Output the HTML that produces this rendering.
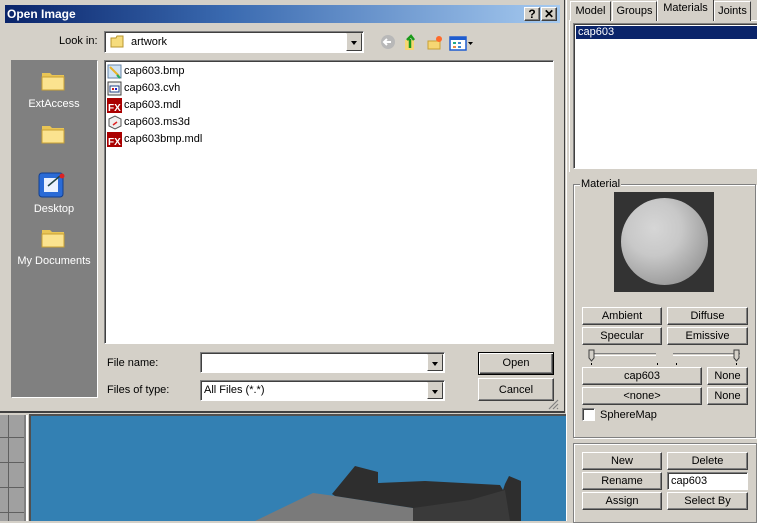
<!DOCTYPE html>
<html><head><meta charset="utf-8"><style>
*{margin:0;padding:0;box-sizing:border-box}
body{width:757px;height:521px;overflow:hidden;background:#d4d0c8;font-family:"Liberation Sans",sans-serif;font-size:11px;color:#000;position:relative}
.a{position:absolute}
.btn{position:absolute;background:#d4d0c8;border:1px solid;border-color:#fff #404040 #404040 #fff;box-shadow:inset -1px -1px 0 #808080;text-align:center;font-size:11px;line-height:17px}
.sunk{position:absolute;background:#fff;border:1px solid;border-color:#808080 #fff #fff #808080;box-shadow:inset 1px 1px 0 #404040}
.dd{position:absolute;right:1px;top:1px;bottom:1px;width:16px;background:#d4d0c8;border:1px solid;border-color:#d4d0c8 #404040 #404040 #fff}
.dd:after{content:"";position:absolute;left:4px;top:7px;border-left:3.5px solid transparent;border-right:3.5px solid transparent;border-top:4px solid #000}
.fi{position:absolute;left:107px;height:16px;line-height:16px;font-size:11px;padding-left:17px}
.ic{position:absolute;left:0;top:1px;width:15px;height:15px}
.wl{color:#fff;font-size:11px;text-align:center;position:absolute;width:86px;left:11px}
</style></head><body>
<div class="a" style="left:0;top:413px;width:566px;height:108px;background:#d4d0c8"></div>
<div class="a" style="left:0;top:415px;width:24px;height:106px;background:#a0a0a0;background-image:linear-gradient(90deg,transparent 8px,#606060 8px,#606060 9px,transparent 9px),repeating-linear-gradient(180deg,transparent 0,transparent 22px,#606060 22px,#606060 23px,transparent 23px,transparent 25px)"></div>
<div class="a" style="left:24px;top:415px;width:2px;height:106px;background:#808080"></div>
<div class="a" style="left:26px;top:415px;width:2px;height:106px;background:#fff"></div>
<div class="a" style="left:29px;top:414px;width:537px;height:107px;background:#3380b3;border-left:2px solid #505050;border-top:2px solid #505050"></div>
<svg class="a" style="left:0;top:0" width="566" height="521">
<polygon points="255,521 313,493 335,496 413,508 413,521" fill="#7a7a7a"/>
<polygon points="332,494 355,466 378,472 378,483 425,481 500,485 503,490 505,484 509,476 521,481 521,521 485,521 413,521 413,508 335,496" fill="#2e2e2e"/>
<polygon points="413,508 470,500 505,490 510,521 413,521" fill="#3a3a3a"/>
</svg>
<div class="a" style="left:0;top:0;width:565px;height:413px;background:#d4d0c8;border-right:1px solid #404040;border-bottom:2px solid #404040"></div>
<div class="a" style="left:5px;top:5px;width:555px;height:18px;background:linear-gradient(90deg,#0a246a,#3a6ab0 40%,#a6caf0);color:#fff;font-weight:bold;font-size:12px;line-height:18px;padding-left:2px">Open Image</div>
<div class="btn" style="left:524px;top:7px;width:16px;height:14px;font-weight:bold;line-height:12px;font-size:12px">?</div>
<div class="btn" style="left:541px;top:7px;width:16px;height:14px;font-weight:bold;line-height:12px;font-size:12px">✕</div>
<div class="a" style="left:59px;top:35px">Look in:</div>
<div class="sunk" style="left:104px;top:31px;width:260px;height:22px">
<svg class="a" style="left:5px;top:3px" width="16" height="13"><path d="M1 3h5l1-2h6v11H1z" fill="#f6dc7c" stroke="#b8962e"/></svg>
<span class="a" style="left:26px;top:4px">artwork</span><div class="dd"></div></div>
<svg class="a" style="left:380px;top:34px" width="95" height="17">
<circle cx="8" cy="8" r="7" fill="#b8b8b8"/><path d="M11 8H5M7 5 4 8l3 3" stroke="#fff" stroke-width="2" fill="none"/>
<path d="M25 6h9v10h-9z" fill="#f6d673"/><path d="M30 14V5M27 6l4-4 3 4" stroke="#1a9a1a" stroke-width="2.5" fill="none"/>
<path d="M48 7h12v8H48z" fill="#f6d673" stroke="#c9a033"/><circle cx="59" cy="5" r="3" fill="#ff6a2a"/>
<rect x="70" y="3" width="16" height="13" fill="#fff" stroke="#1e5ccf" stroke-width="1.5"/><rect x="70" y="3" width="16" height="3" fill="#1e5ccf"/><rect x="73" y="8" width="3" height="2" fill="#2a8"/><rect x="78" y="8" width="3" height="2" fill="#48c"/><rect x="73" y="12" width="3" height="2" fill="#e84"/><rect x="78" y="12" width="3" height="2" fill="#48c"/>
<path d="M88 8h5l-2.5 3z" fill="#000"/></svg>
<div class="a" style="left:11px;top:60px;width:87px;height:338px;background:#808080;border:1px solid;border-color:#808080 #fff #fff #808080"></div>
<svg class="a" style="left:40px;top:68px" width="28" height="24"><path d="M2 5h8l2 2h12v15H2z" fill="#e9c555"/><path d="M2 9h22v13H2z" fill="#fbe38f" stroke="#c9a033"/></svg>
<div class="wl" style="top:98px">ExtAccess</div>
<svg class="a" style="left:40px;top:121px" width="28" height="24"><path d="M2 5h8l2 2h12v15H2z" fill="#e9c555"/><path d="M2 9h22v13H2z" fill="#fbe38f" stroke="#c9a033"/></svg>
<svg class="a" style="left:37px;top:170px" width="32" height="30"><rect x="2" y="3" width="24" height="24" rx="3" fill="#2a6bd6" stroke="#123f8f"/><rect x="7" y="8" width="14" height="14" fill="#eaf2ff"/><path d="M11 16l12-10" stroke="#244" stroke-width="1.5"/><circle cx="25" cy="6" r="2.5" fill="#d22"/></svg>
<div class="wl" style="top:203px">Desktop</div>
<svg class="a" style="left:40px;top:225px" width="28" height="24"><path d="M2 5h8l2 2h12v15H2z" fill="#e9c555"/><path d="M2 9h22v13H2z" fill="#fbe38f" stroke="#c9a033"/></svg>
<div class="wl" style="top:255px">My Documents</div>
<div class="sunk" style="left:104px;top:60px;width:450px;height:284px"></div>
<div class="fi" style="top:63px"><svg class="ic" viewBox="0 0 15 15"><rect x="1" y="1" width="13" height="13" fill="#cfe3f5" stroke="#6a86a6"/><path d="M3 3l9 9" stroke="#e8b22a" stroke-width="2"/><path d="M10 11l3 3" stroke="#2a6" stroke-width="2"/></svg>cap603.bmp</div>
<div class="fi" style="top:80px"><svg class="ic" viewBox="0 0 15 15"><rect x="1" y="1" width="13" height="13" fill="#eee" stroke="#444"/><rect x="3" y="5" width="9" height="6" fill="#fff" stroke="#248"/><rect x="5" y="7" width="2" height="2" fill="#c22"/><rect x="8" y="7" width="2" height="2" fill="#22c"/></svg>cap603.cvh</div>
<div class="fi" style="top:97px"><svg class="ic" viewBox="0 0 15 15"><rect width="15" height="15" fill="#a00"/><text x="1" y="13" font-size="10" font-weight="bold" fill="#fff" font-family="Liberation Sans">FX</text></svg>cap603.mdl</div>
<div class="fi" style="top:114px"><svg class="ic" viewBox="0 0 15 15"><path d="M2 4l6-3 6 3v7l-6 3-6-3z" fill="#eee" stroke="#555"/><path d="M6 10l4-3" stroke="#d22" stroke-width="1.5"/></svg>cap603.ms3d</div>
<div class="fi" style="top:131px"><svg class="ic" viewBox="0 0 15 15"><rect width="15" height="15" fill="#a00"/><text x="1" y="13" font-size="10" font-weight="bold" fill="#fff" font-family="Liberation Sans">FX</text></svg>cap603bmp.mdl</div>
<div class="a" style="left:107px;top:357px">File name:</div>
<div class="sunk" style="left:200px;top:352px;width:245px;height:21px"><div class="dd"></div></div>
<div class="a" style="left:107px;top:384px">Files of type:</div>
<div class="sunk" style="left:200px;top:380px;width:245px;height:21px"><span class="a" style="left:3px;top:3px">All Files (*.*)</span><div class="dd"></div></div>
<div class="btn" style="left:478px;top:352px;width:76px;height:23px;line-height:21px;border:1px solid #000;box-shadow:inset 1px 1px 0 #fff,inset -1px -1px 0 #404040,inset -2px -2px 0 #808080">Open</div>
<div class="btn" style="left:478px;top:378px;width:76px;height:23px;line-height:22px">Cancel</div>
<svg class="a" style="left:548px;top:399px" width="12" height="12"><path d="M10 1L1 10M10 5L5 10M10 9L9 10" stroke="#808080" stroke-width="1.2"/></svg>
<div class="a" style="left:566px;top:0;width:191px;height:521px;background:#d4d0c8;border-left:1px solid #fff"></div>
<div class="a" style="left:569px;top:20px;width:188px;height:152px;border-left:1px solid #fff;border-top:1px solid #fff"></div>
<div class="btn" style="left:570px;top:1px;width:41px;height:20px;border-bottom:none;box-shadow:none;line-height:18px">Model</div>
<div class="btn" style="left:612px;top:1px;width:45px;height:20px;border-bottom:none;box-shadow:none;line-height:18px">Groups</div>
<div class="btn" style="left:657px;top:-1px;width:57px;height:22px;border-bottom:none;box-shadow:none;line-height:17px;z-index:2">Materials</div>
<div class="btn" style="left:714px;top:1px;width:37px;height:20px;border-bottom:none;box-shadow:none;line-height:18px">Joints</div>
<div class="sunk" style="left:573px;top:23px;width:186px;height:146px"><div class="a" style="left:2px;top:2px;right:0;height:13px;background:#0a246a;color:#fff;line-height:13px;padding-left:2px">cap603</div></div>
<div class="a" style="left:573px;top:184px;width:183px;height:254px;border:1px solid #808080;box-shadow:1px 1px 0 #fff,inset 1px 1px 0 #fff"></div>
<div class="a" style="left:580px;top:178px;background:#d4d0c8;padding:0 1px">Material</div>
<div class="a" style="left:614px;top:192px;width:100px;height:100px;background:#333">
<div class="a" style="left:7px;top:6px;width:87px;height:87px;border-radius:50%;background:radial-gradient(circle at 38% 35%,#d6d6d6 0,#c8c8c8 35%,#999 78%,#666 100%)"></div></div>
<div class="btn" style="left:582px;top:307px;width:80px;height:18px">Ambient</div>
<div class="btn" style="left:667px;top:307px;width:81px;height:18px">Diffuse</div>
<div class="btn" style="left:582px;top:327px;width:80px;height:18px">Specular</div>
<div class="btn" style="left:667px;top:327px;width:81px;height:18px">Emissive</div>
<svg class="a" style="left:582px;top:347px" width="170" height="20">
<path d="M7 6.5h67" stroke="#808080"/><path d="M7 8.5h67" stroke="#fff"/>
<path d="M91 6.5h67" stroke="#808080"/><path d="M91 8.5h67" stroke="#fff"/>
<path d="M7 3h5v8l-2.5 3-2.5-3z" fill="#d4d0c8" stroke="#404040"/>
<path d="M152 3h5v8l-2.5 3-2.5-3z" fill="#d4d0c8" stroke="#404040"/>
<path d="M9.5 16v2M75.5 16v2M94.5 16v2M154.5 16v2" stroke="#000"/></svg>
<div class="btn" style="left:582px;top:367px;width:120px;height:18px">cap603</div>
<div class="btn" style="left:707px;top:367px;width:41px;height:18px">None</div>
<div class="btn" style="left:582px;top:387px;width:120px;height:18px">&lt;none&gt;</div>
<div class="btn" style="left:707px;top:387px;width:41px;height:18px">None</div>
<div class="sunk" style="left:582px;top:408px;width:13px;height:13px"></div>
<div class="a" style="left:600px;top:409px">SphereMap</div>
<div class="a" style="left:573px;top:443px;width:184px;height:80px;border:1px solid #808080;box-shadow:inset 1px 1px 0 #fff"></div>
<div class="btn" style="left:582px;top:452px;width:80px;height:18px">New</div>
<div class="btn" style="left:667px;top:452px;width:81px;height:18px">Delete</div>
<div class="btn" style="left:582px;top:472px;width:80px;height:18px">Rename</div>
<div class="sunk" style="left:667px;top:472px;width:81px;height:18px;padding:2px 0 0 3px;line-height:13px">cap603</div>
<div class="btn" style="left:582px;top:492px;width:80px;height:18px">Assign</div>
<div class="btn" style="left:667px;top:492px;width:81px;height:18px">Select By</div>
</body></html>
